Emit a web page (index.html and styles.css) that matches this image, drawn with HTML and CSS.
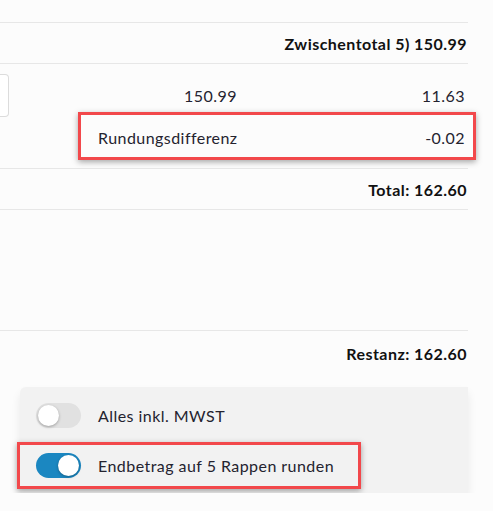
FILE: index.html
```html
<!DOCTYPE html>
<html lang="de">
<head>
<meta charset="UTF-8" />
<meta name="viewport" content="width=device-width, initial-scale=1" />
<title>Rechnung</title>
<link rel="stylesheet" href="styles.css">
</head>
<body>
<div class="invoice">
  <div class="row row-top"></div>
  <div class="row row-sum"><b>Zwischentotal 5) 150.99</b></div>

  <div class="items">
    <div class="item">
      <div class="qty-box"></div>
      <div class="cell cell-net">150.99</div>
      <div class="cell cell-tax">11.63</div>
    </div>
    <div class="rounding highlight">
      <span>Rundungsdifferenz</span>
      <span>-0.02</span>
    </div>
  </div>

  <div class="row row-sum"><b>Total: 162.60</b></div>
  <div class="row row-empty"></div>
  <div class="row-rest"><b>Restanz: 162.60</b></div>

  <div class="options">
    <label class="option">
      <span class="switch"><span class="knob"></span></span>
      <span>Alles inkl. MWST</span>
    </label>
    <label class="option highlight">
      <span class="switch on"><span class="knob"></span></span>
      <span>Endbetrag auf 5 Rappen runden</span>
    </label>
  </div>
</div>
</body>
</html>
```

FILE: styles.css
```css
* {
  margin: 0;
  padding: 0;
  box-sizing: border-box;
}
body {
  font-family: Lato, "Open Sans", sans-serif;
  font-size: 16px;
  letter-spacing: 0.45px;
  color: #24232f;
  background: #fcfcfc;
}
.invoice {
  width: 468px;
}
.row {
  display: flex;
  justify-content: flex-end;
  align-items: center;
  border-bottom: 1px solid #e7e7e7;
  padding-right: 1px;
}
.row b, .row-rest b {
  font-weight: 700;
  color: #111;
}
.row-top {
  height: 23px;
}
.row-sum {
  height: 41px;
}
.row-empty {
  height: 121px;
}
.items {
  border-bottom: 1px solid #e7e7e7;
  padding-bottom: 8px;
}
.item {
  display: flex;
  align-items: center;
  height: 53px;
  padding-top: 10px;
  padding-right: 3px;
}
.qty-box {
  width: 9px;
  height: 43px;
  border: 1px solid #dcdcdc;
  border-left: none;
  border-radius: 0 4px 4px 0;
  background: #fff;
}
.cell {
  text-align: right;
}
.cell-net {
  width: 228px;
}
.cell-tax {
  flex: 1;
}
.highlight {
  border: 3px solid #f2484b !important;
  box-shadow: 0 2px 6px rgba(0, 0, 0, 0.35);
}
.rounding {
  display: flex;
  justify-content: space-between;
  align-items: center;
  margin: -5px -8px 0 78px;
  height: 48px;
  padding: 3px 8px 0 17px;
}
.row-rest {
  display: flex;
  justify-content: flex-end;
  align-items: center;
  height: 44px;
  padding-right: 1px;
}
.options {
  margin: 12px 0 0 20px;
  background: #f2f2f2;
  border-radius: 6px 0 0 0;
  padding: 5px 0 4px;
  display: flex;
  flex-direction: column;
  gap: 3px;
  box-shadow: 0 6px 10px rgba(0, 0, 0, 0.08);
}
.option {
  display: flex;
  align-items: center;
  gap: 17px;
  width: fit-content;
  height: 47px;
  margin-left: -3px;
  padding: 0 24px 0 16px;
  border: 3px solid transparent;
}
.switch {
  position: relative;
  width: 45px;
  height: 25px;
  border-radius: 13px;
  background: #e1e1e1;
}
.switch.on {
  background: #1b87c1;
}
.knob {
  position: absolute;
  top: 2px;
  left: 2px;
  width: 21px;
  height: 21px;
  border-radius: 50%;
  background: #fff;
  box-shadow: 0 1px 3px rgba(0, 0, 0, 0.3);
}
.switch.on .knob {
  left: 22px;
}
```
